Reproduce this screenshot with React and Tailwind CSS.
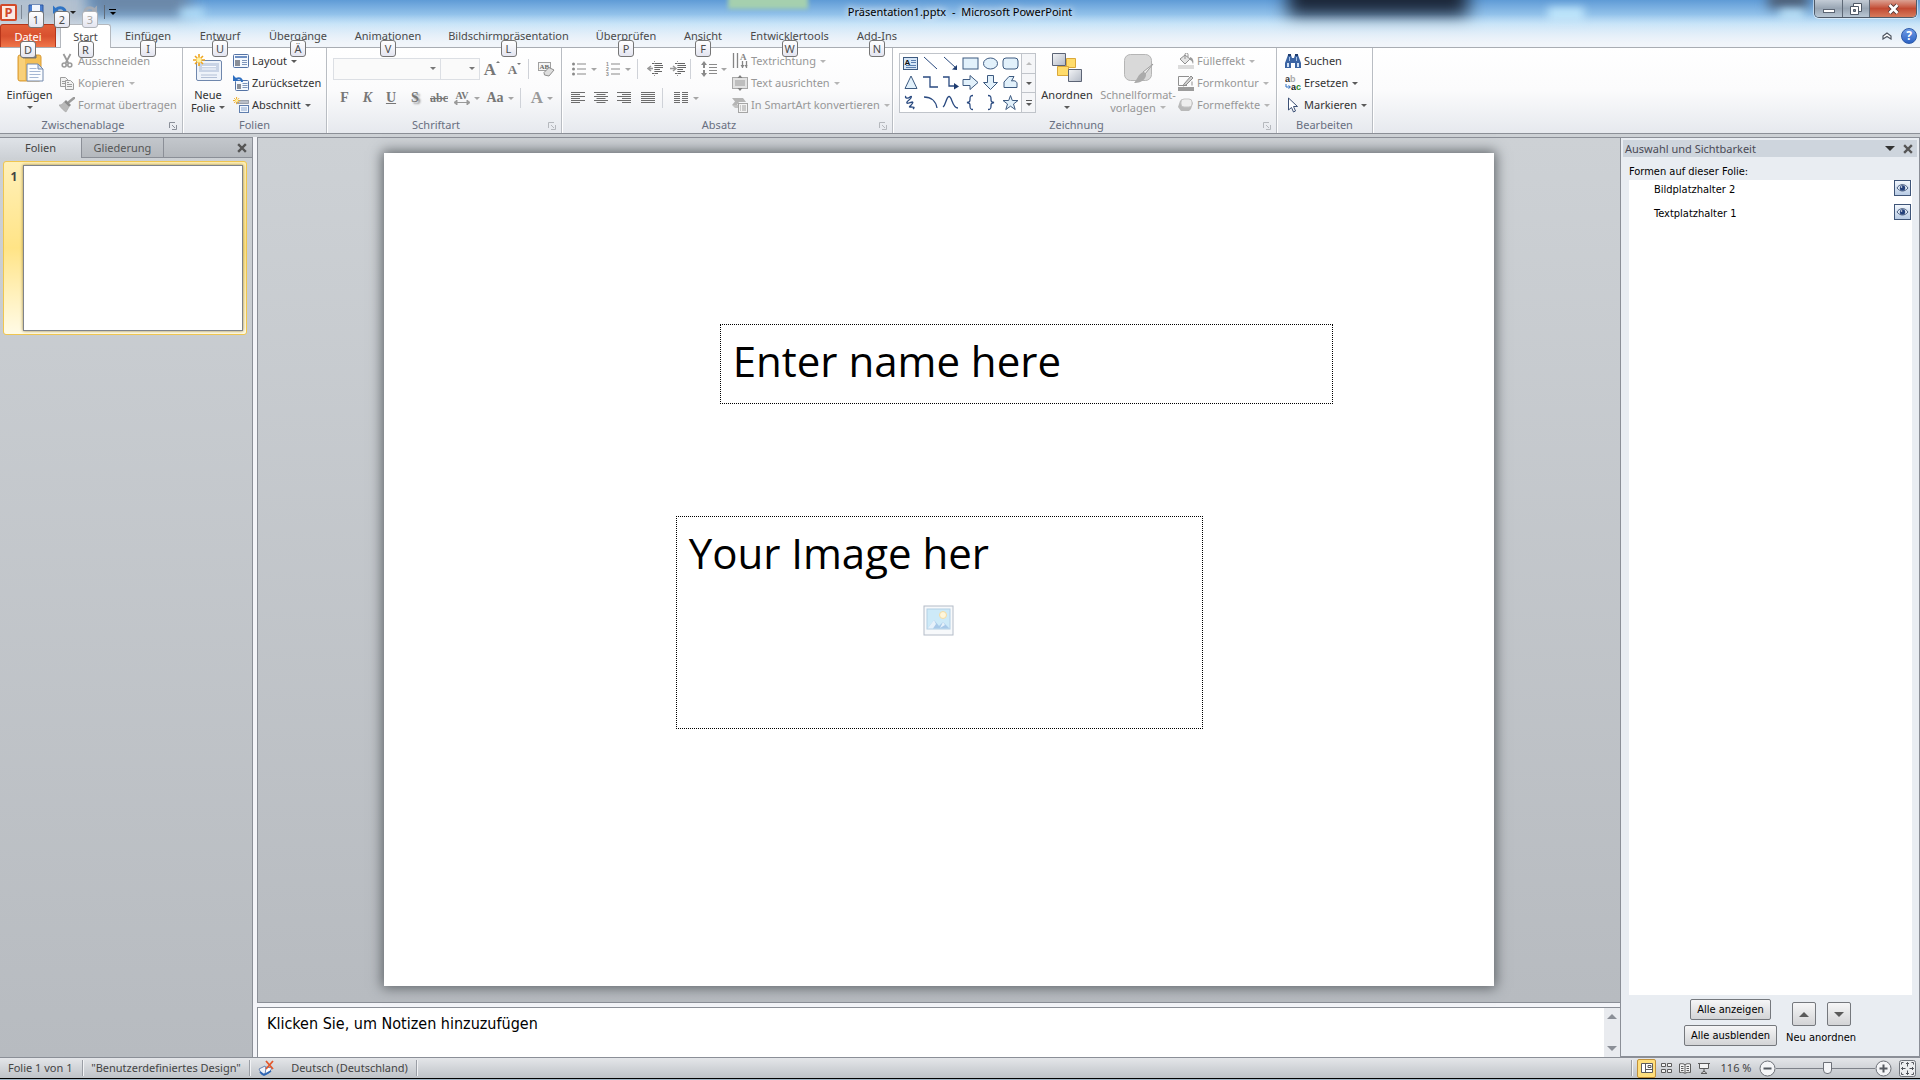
import React from "react";

const Caret = ({ up, className = "text-[#5a5a5a]", w = 6 }) => (
  <svg width={w} height={w / 2} viewBox="0 0 6 3" className={`shrink-0 ${className}`}>
    <path d={up ? "M0 3h6L3 0z" : "M0 0h6L3 3z"} fill="currentColor" />
  </svg>
);

const CloseX = () => (
  <svg width="10" height="10" viewBox="0 0 10 10">
    <path d="M2 2l6 6M8 2l-6 6" stroke="#555" strokeWidth="2.4" strokeLinecap="square" />
  </svg>
);

// ---------- icons: title bar ----------
const SaveIcon = () => (
  <svg width="16" height="16" viewBox="0 0 16 16">
    <path d="M1 1h14v14H3l-2-2z" fill="#4a7fd0" stroke="#2c56a0" />
    <path d="M4 1h8v7H4z" fill="#f2f6fc" />
    <path d="M5 10h6v5H5z" fill="#dfe6f0" />
  </svg>
);

const UndoIcon = ({ redo }) => (
  <svg width="16" height="16" viewBox="0 0 16 16" className={redo ? "-scale-x-100" : ""}>
    <path d="M4 5.500C8 2 14 4 13 10c-.3 2-1.500 3.500-3 4.500" fill="none" stroke={redo ? "#a4abb5" : "#2f74c4"} strokeWidth="3" />
    <path d="M1 1.500v8h8z" fill={redo ? "#a4abb5" : "#2f74c4"} />
  </svg>
);

// ---------- icons: clipboard / slides ----------
const PasteIcon = () => (
  <svg width="32" height="32" viewBox="0 0 32 32">
    <rect x="4" y="3" width="23" height="26" rx="2" fill="#f3bf56" stroke="#d99a35" />
    <rect x="5" y="4" width="6" height="24" fill="#f8d07a" />
    <path d="M9 6V3h3V1h7v2h3v3z" fill="#8b8f96" stroke="#5e6269" strokeWidth=".8" />
    <path d="M13 12h11l5 5v12H13z" fill="#fbfdff" stroke="#7289ad" />
    <path d="M24 12v5h5z" fill="#d5e0f0" stroke="#7289ad" />
    <path d="M15.500 16.500h7M15.500 19.500h11M15.500 22.500h11M15.500 25.500h9" stroke="#a5b7d3" />
  </svg>
);

const ScissorsIcon = () => (
  <svg width="16" height="16" viewBox="0 0 16 16" fill="none" stroke="#9a9a9a">
    <path d="M4.500 1l4.800 9M11.500 1L6.700 10" strokeWidth="1.800" />
    <circle cx="5.200" cy="12" r="2" strokeWidth="1.600" />
    <circle cx="10.800" cy="12" r="2" strokeWidth="1.600" />
  </svg>
);

const CopyIcon = () => (
  <svg width="16" height="16" viewBox="0 0 16 16" fill="#f1f1f1" stroke="#9c9c9c">
    <path d="M1.500 2.500h5l3 3v6h-8z" />
    <path d="M3 6.500h3M3 8.500h3" />
    <path d="M6.500 5.500h5l3 3v6h-8z" />
    <path d="M8 9.500h5M8 11.500h5M8 7.500h2" />
  </svg>
);

const BrushIcon = () => (
  <svg width="16" height="16" viewBox="0 0 16 16">
    <path d="M15 1l-5 4" stroke="#9b9b9b" strokeWidth="2.500" strokeLinecap="round" />
    <path d="M7 3l5 5-2 2-5-5z" fill="#8c8c8c" />
    <path d="M5 5l5 5-3 5c-2-1-5-4-7-7 2 0 4-1 5-3z" fill="#b9b9b9" stroke="#a5a5a5" strokeWidth=".6" />
  </svg>
);

const Spark = ({ s = 1 }) => (
  <g transform={`scale(${s})`}>
    <path d="M6 0v12M0 6h12M2 2l8 8M10 2l-8 8" stroke="#efa61f" strokeWidth="1.600" />
    <circle cx="6" cy="6" r="2.500" fill="#fff3a0" />
  </g>
);

const NewSlideIcon = () => (
  <svg width="32" height="32" viewBox="0 0 32 32">
    <rect x="4.500" y="8.500" width="25" height="20" rx="1.500" fill="#eef3fa" stroke="#6f87ad" />
    <rect x="7" y="11" width="20" height="9" fill="#c9d4e6" />
    <path d="M10 14.500h14M10 17h14" stroke="#f7faff" />
    <path d="M9 23h16M9 25.500h16" stroke="#b3c0d6" />
    <g transform="translate(1 2)">
      <Spark />
    </g>
  </svg>
);

const LayoutIcon = () => (
  <svg width="16" height="16" viewBox="0 0 16 16">
    <rect x=".5" y="1.500" width="15" height="13" rx="1" fill="#f4f8fd" stroke="#5473a5" />
    <path d="M2 4h12" stroke="#6d8fc3" strokeWidth="2" />
    <rect x="2" y="7" width="5" height="6" fill="#8a8f98" />
    <path d="M9 7.500h5M9 9.500h5M9 11.500h5" stroke="#7f96bb" />
  </svg>
);

const ResetIcon = () => (
  <svg width="16" height="16" viewBox="0 0 16 16">
    <rect x="2.500" y="5.500" width="13" height="10" rx="1" fill="#f4f8fd" stroke="#5473a5" />
    <rect x="4" y="9" width="4" height="5" fill="#8a8f98" />
    <path d="M9.500 8.500h5M9.500 10.500h5M9.500 12.500h5" stroke="#7f96bb" />
    <path d="M3 4c4-2 6 0 6 3" fill="none" stroke="#2f6fc0" strokeWidth="2" />
    <path d="M0 0v6h6z" fill="#2f6fc0" />
  </svg>
);

const SectionIcon = () => (
  <svg width="16" height="16" viewBox="0 0 16 16">
    <rect x="4.500" y="3.500" width="11" height="3" fill="#b8bec8" stroke="#8c93a0" strokeWidth=".8" />
    <rect x="6.500" y="8.500" width="9" height="7" fill="#f2f7fd" stroke="#5f7eae" />
    <path d="M8 11h6M8 13h6" stroke="#8da8cf" />
    <Spark s={0.6} />
  </svg>
);

// ---------- icons: font / paragraph ----------
const ClearFormatIcon = () => (
  <svg width="18" height="18" viewBox="0 0 18 18">
    <rect x="1.500" y="2.500" width="12" height="8" fill="#f4f4f4" stroke="#a0a0a0" />
    <text x="2.500" y="9" fontSize="7" fontFamily="Liberation Serif" fontWeight="bold" fill="#666">AB</text>
    <path d="M7 12.500l5-5 5 2.500-5 6-4.500-1z" fill="#dedede" stroke="#8e8e8e" />
  </svg>
);

const BulletsIcon = () => (
  <svg width="16" height="16" viewBox="0 0 16 16" fill="#8a8a8a">
    <circle cx="2.500" cy="3" r="1.500" />
    <circle cx="2.500" cy="8" r="1.500" />
    <circle cx="2.500" cy="13" r="1.500" />
    <path d="M6 2.500h9v1H6zM6 7.500h9v1H6zM6 12.500h9v1H6z" />
  </svg>
);

const NumberingIcon = () => (
  <svg width="16" height="16" viewBox="0 0 16 16" fill="#8a8a8a" fontFamily="Liberation Sans" fontSize="5" fontWeight="bold">
    <text x="1" y="5">1</text>
    <text x="1" y="10">2</text>
    <text x="1" y="15">3</text>
    <path d="M6 2.500h9v1H6zM6 7.500h9v1H6zM6 12.500h9v1H6z" />
  </svg>
);

const IndentIcon = ({ out }) => (
  <svg width="16" height="16" viewBox="0 0 16 16" stroke="#666">
    <path d="M5 2.500h10M8 4.500h8M8 6.500h8M8 8.500h5M8 10.500h7M5 12.500h6" />
    <path d="M7.500 0v16" strokeDasharray="1 1" stroke="#999" />
    <path d={out ? "M6 7.500H1M4 5L1 7.500 4 10" : "M0 7.500h5M3 5l3 2.500L3 10"} fill="none" stroke="#999" strokeWidth="1.500" />
  </svg>
);

const LineSpacingIcon = () => (
  <svg width="16" height="16" viewBox="0 0 16 16" fill="#8a8a8a">
    <path d="M3 0l3 4H4v3H2V4H0zM3 16l3-4H4V9H2v3H0z" />
    <path d="M8 3h8v1H8zM8 6h8v1H8zM8 9h8v1H8zM8 12h8v1H8z" />
  </svg>
);

const alignLines = {
  left: "M1 2.500h14M1 4.500h9M1 6.500h14M1 8.500h9M1 10.500h14M1 12.500h9",
  center: "M1 2.500h14M3.500 4.500h9M1 6.500h14M3.500 8.500h9M1 10.500h14M3.500 12.500h9",
  right: "M1 2.500h14M6 4.500h9M1 6.500h14M6 8.500h9M1 10.500h14M6 12.500h9",
  justify: "M1 2.500h14M1 4.500h14M1 6.500h14M1 8.500h14M1 10.500h14M1 12.500h14",
  columns: "M1 2.500h6M9 2.500h6M1 4.500h6M9 4.500h6M1 6.500h6M9 6.500h6M1 8.500h6M9 8.500h6M1 10.500h6M9 10.500h6M1 12.500h6M9 12.500h6",
};

const AlignIcon = ({ kind }) => (
  <svg width="16" height="16" viewBox="0 0 16 16">
    <path d={alignLines[kind]} stroke="#6d6d6d" />
  </svg>
);

const TextDirectionIcon = () => (
  <svg width="16" height="16" viewBox="0 0 16 16">
    <path d="M1.500 0v15M5.500 0v15M10.500 8v7M14.500 8v7" stroke="#858585" strokeWidth="1.300" />
    <path d="M8.500 12l2 3 2-3zM12.500 12l2 3 1-3z" fill="#858585" />
    <text x="8" y="7" fontSize="9" fontFamily="Liberation Serif" fontWeight="bold" fill="#858585">A</text>
  </svg>
);

const AlignTextIcon = () => (
  <svg width="16" height="16" viewBox="0 0 16 16">
    <rect x=".5" y="2.500" width="15" height="11" fill="#e2e2e2" stroke="#a8a8a8" />
    <path d="M3 6h10M3 8h10M3 10h10" stroke="#9a9a9a" />
    <path d="M8 0l2.500 3h-5zM8 16l2.500-3h-5z" fill="#7f7f7f" />
  </svg>
);

const SmartArtIcon = () => (
  <svg width="16" height="16" viewBox="0 0 16 16">
    <path d="M0 1h11l3 4H7l-2 3H0l3-3.500z" fill="#b5b5b5" />
    <path d="M0 8h6v3H3z" fill="#c4c4c4" />
    <rect x="6.500" y="6.500" width="9" height="9" fill="#f3f3f3" stroke="#a5a5a5" />
    <path d="M8 9h1M10 9h4M8 11h1M10 11h4M8 13h1M10 13h4" stroke="#a0a0a0" />
  </svg>
);

// ---------- icons: drawing ----------
const shapeProps = { fill: "#e2f1fb", stroke: "#3d5a80" };
const shapes = [
  { name: "Textfeld", body: (
    <>
      <rect x="1.500" y="2.500" width="14" height="12" {...shapeProps} fill="#d6e6f7" />
      <text x="2.500" y="9.500" fontSize="8" fontFamily="Liberation Sans" fontWeight="bold" fill="#111">A</text>
      <path d="M9 5.500h5M9 7.500h5M4 10.500h10M4 12.500h10" stroke="#5a7fb0" />
    </>
  ) },
  { name: "Linie", body: <path d="M2 2l13 12" stroke="#2a4a80" /> },
  { name: "Pfeil", body: (
    <>
      <path d="M2 2l12 11" stroke="#2a4a80" />
      <path d="M15 15v-5l-5 4.500z" fill="#1f3c70" />
    </>
  ) },
  { name: "Rechteck", body: <rect x="1" y="3" width="15" height="11" {...shapeProps} /> },
  { name: "Ellipse", body: <ellipse cx="8.500" cy="8.500" rx="7" ry="5.500" {...shapeProps} /> },
  { name: "Abgerundetes Rechteck", body: <rect x="1" y="3" width="15" height="11" rx="3" {...shapeProps} /> },
  { name: "Dreieck", body: <path d="M9 2l6 12.500H3z" {...shapeProps} /> },
  { name: "Gewinkelte Verbindung", body: <path d="M1 3h7v10h8" fill="none" stroke="#2a4a80" strokeWidth="1.300" /> },
  { name: "Gewinkelte Verbindung mit Pfeil", body: (
    <>
      <path d="M1 3h6v9h7" fill="none" stroke="#2a4a80" strokeWidth="1.300" />
      <path d="M12 9l5 3.500-5 3z" fill="#1f3c70" />
    </>
  ) },
  { name: "Pfeil nach rechts", body: <path d="M1 5.500h7v-4l8 7-8 7v-4H1z" {...shapeProps} /> },
  { name: "Pfeil nach unten", body: <path d="M5.500 1.500h6v7h4l-7 7-7-7h4z" {...shapeProps} /> },
  { name: "Freihandform", body: <path d="M2 13.500V8l5-5.500h5L9.500 7c4-1 6 1 5.500 4v2.500z" {...shapeProps} /> },
  { name: "Skizze", body: <path d="M4 2c-2 2 2 3 4 1s2 1-1 3-3 4 0 3 5-2 3 1-4 3-1 3 4 0 2 2" fill="none" stroke="#2a4a80" strokeWidth="1.300" /> },
  { name: "Bogen", body: <path d="M2 3c7 0 12 4 13 11" fill="none" stroke="#2a4a80" strokeWidth="1.300" /> },
  { name: "Kurve", body: <path d="M1 13C4 11 4 3 7 2.500S10 14 16 14" fill="none" stroke="#2a4a80" strokeWidth="1.300" /> },
  { name: "Klammer links", body: <path d="M11 1.500C8 1.500 8 3 8 5s0 3-3 3.500C8 9 8 10 8 12s0 3.500 3 3.500" fill="none" stroke="#2a4a80" strokeWidth="1.300" /> },
  { name: "Klammer rechts", body: <path d="M6 1.500c3 0 3 1.500 3 3.500s0 3 3 3.500C9 9 9 10 9 12s0 3.500-3 3.500" fill="none" stroke="#2a4a80" strokeWidth="1.300" /> },
  { name: "Stern", body: <path d="M8.500 1.500l1.800 5h5.700l-4.500 3.500 1.700 5.500-4.700-3.300-4.700 3.300L5.500 10 1 6.500h5.700z" {...shapeProps} /> },
];

const ArrangeIcon = () => (
  <svg width="32" height="32" viewBox="0 0 32 32">
    <defs>
      <linearGradient id="tile" x1="0" y1="0" x2="1" y2="1">
        <stop offset="0" stopColor="#f4f5f7" />
        <stop offset="1" stopColor="#b3bac6" />
      </linearGradient>
    </defs>
    <path d="M15.500 6.500h9v9h-9z" fill="#ffdc6b" stroke="#dba83a" />
    <path d="M6.500 14.500h11v9h-11z" fill="#ffdc6b" stroke="#dba83a" />
    <path d="M1.500 1.500h13v12h-13z" fill="url(#tile)" stroke="#5c6475" />
    <path d="M17.500 17.500h13v12h-13z" fill="url(#tile)" stroke="#5c6475" />
  </svg>
);

const QuickStyleIcon = () => (
  <svg width="32" height="32" viewBox="0 0 32 32">
    <rect x="2.500" y="2.500" width="27" height="26" rx="6" fill="#d9d9d9" stroke="#b5b5b5" />
    <path d="M31 12l-8 10-2-2z" fill="#f0f0f0" stroke="#9e9e9e" />
    <path d="M21 20c3 0 4 3 2 6-2 4-7 5-11 5 3-3 4-9 9-11z" fill="#ababab" />
  </svg>
);

const FillIcon = () => (
  <svg width="16" height="16" viewBox="0 0 16 16">
    <path d="M2 6l5-4 5 4-5 5z" fill="#e4e4e4" stroke="#8f8f8f" />
    <path d="M7 6V1.500a1.500 1.500 0 013 0V4" fill="none" stroke="#8f8f8f" />
    <path d="M12 4c3 1 4 4 3 7-1-2-1-4-4-4z" fill="#9b9b9b" />
    <path d="M0 12h16v4H0z" fill="#dcdcdc" />
  </svg>
);

const OutlineIcon = () => (
  <svg width="16" height="16" viewBox="0 0 16 16">
    <path d="M11 1.500H.5v9H9M14 6.500v4" fill="none" stroke="#8f8f8f" />
    <path d="M6 9l7-8 2 2-7 7-3 1z" fill="#d0d0d0" stroke="#8a8a8a" />
    <path d="M0 12h16v4H0z" fill="#9c9c9c" />
  </svg>
);

const EffectsIcon = () => (
  <svg width="16" height="16" viewBox="0 0 16 16">
    <path d="M4 2h8l3 4-2 6-2 2H3L0 10l2-6z" fill="#b9b9b9" />
    <rect x="3" y="2" width="11" height="8" rx="3" fill="#eeeeee" stroke="#c5c5c5" />
  </svg>
);

// ---------- icons: editing ----------
const FindIcon = () => (
  <svg width="16" height="16" viewBox="0 0 16 16">
    <path d="M3 2h3l1 3h2l1-3h3l3 8v5h-6v-5H6v5H0v-5z" fill="#3b64a3" />
    <path d="M3 1h3v2H3zM10 1h3v2h-3z" fill="#1f3d70" />
    <path d="M2 10h2v4H2zM12 10h2v4h-2z" fill="#cfe0f5" />
    <path d="M4 4h1v4H4zM11 4h1v4h-1z" fill="#a8c4e8" />
  </svg>
);

const ReplaceIcon = () => (
  <svg width="16" height="16" viewBox="0 0 16 16" fontFamily="Liberation Sans" fontSize="9" fontWeight="bold">
    <text x="0" y="7" fill="#333">a</text>
    <text x="5" y="7" fill="#aaa">b</text>
    <text x="6" y="15" fill="#222">a</text>
    <text x="11" y="15" fill="#1f8a2d">c</text>
    <path d="M1 9v3h4M3.500 10.500l2 1.500-2 1.500" fill="none" stroke="#2f6fc0" />
  </svg>
);

const SelectIcon = () => (
  <svg width="16" height="16" viewBox="0 0 16 16">
    <path d="M3.500 1v12l3-2.500 2 4.500 2-1-2-4.500h4z" fill="#fff" stroke="#3c5075" />
  </svg>
);

const EyeIcon = () => (
  <svg width="13" height="10" viewBox="0 0 13 10">
    <path d="M1 5c2-4 8-5 11 0-3 4-8 4-11 0z" fill="#dfe9f5" stroke="#4b5f80" />
    <circle cx="6.500" cy="5" r="2.700" fill="#24407a" />
    <circle cx="5.500" cy="4" r=".8" fill="#fff" />
  </svg>
);

const SpellIcon = () => (
  <svg width="17" height="16" viewBox="0 0 17 16">
    <path d="M1 9l6-3 3 6-6 3z" fill="#eef3fb" stroke="#6b86b3" />
    <path d="M8 7l6 1-3 5-4 2z" fill="#fff" stroke="#6b86b3" />
    <path d="M2 12l4 3L13 11" stroke="#2d66b5" strokeWidth="1.800" fill="none" />
    <path d="M8 1l7 8M15 1L8 9" stroke="#e4572a" strokeWidth="1.800" />
  </svg>
);

const PictureIcon = () => (
  <svg width="32" height="32" viewBox="0 0 32 32">
    <rect x="1" y="1" width="29" height="29" fill="#f7f9fb" stroke="#b4bcc8" />
    <rect x="4" y="4" width="23" height="20" fill="#cdeaf8" stroke="#b4cfe4" />
    <circle cx="20" cy="10" r="3.500" fill="#fff6da" stroke="#f3dba3" />
    <path d="M4.500 23.500L11 15l5 6 4-4 6.500 6.500z" fill="#a8c9e8" />
    <path d="M4.500 23.500L11 15l2 4-3 4.500zM17 23l3-6 2 3z" fill="#e6f1fa" />
  </svg>
);

// ---------- small building blocks ----------
const KeyTip = ({ children, dim }) => (
  <kbd
    className={`absolute left-1/2 -translate-x-1/2 z-10 w-4 h-[17px] rounded-[3px] border bg-linear-to-b from-white to-[#e4e5f0] font-[inherit] text-[11px] leading-[15px] text-center ${
      dim ? "border-[#b0b4ba] text-[#a5a5a5]" : "border-[#767676] text-[#4c4c4c]"
    } ${typeof children === "number" ? "top-[11px]" : "top-4"}`}
  >
    {children}
  </kbd>
);

const SmallButton = ({ icon, label, caret, disabled }) => (
  <button type="button" className={`flex items-center h-[22px] whitespace-nowrap ${disabled ? "text-[#979797]" : "text-[#333]"}`}>
    <span className="w-[19px] shrink-0">{icon}</span>
    {label}
    {caret && <Caret className={disabled ? "ml-1 text-[#b5b5b5]" : "ml-1 text-[#5a5a5a]"} />}
  </button>
);

const LargeButton = ({ icon, line1, line2, caret, disabled, className }) => (
  <button type="button" className={`flex flex-col items-center h-[66px] pt-[2px] shrink-0 leading-[13px] whitespace-nowrap ${disabled ? "text-[#979797]" : "text-[#333]"} ${className}`}>
    {icon}
    <span className="mt-1">{line1}</span>
    <span className="flex items-center gap-1 h-[13px]">
      {line2}
      {caret && <Caret className={disabled ? "text-[#b5b5b5]" : "text-[#5a5a5a]"} />}
    </span>
  </button>
);

const ToolButton = ({ label, caret, className = "w-[23px]", children }) => (
  <button type="button" aria-label={label} className={`flex items-center justify-center gap-1 h-[22px] shrink-0 text-[#777] ${className}`}>
    {children}
    {caret && <Caret className="text-[#a5a5a5]" />}
  </button>
);

const Divider = () => <span className="w-px h-5 mx-[3px] bg-[#cfd2d8] shrink-0" />;

const Group = ({ title, launcher, dim, className, children }) => (
  <section className={`flex flex-col shrink-0 pt-[2px] border-r border-[#b9bdc3] shadow-[1px_0_0_#fff] ${className}`}>
    <div className="flex h-[66px]">{children}</div>
    <div className={`relative h-[17px] leading-[17px] text-center text-[#686f80] ${launcher ? "pr-4" : ""}`}>
      {title}
      {launcher && (
        <button type="button" aria-label={`${title} öffnen`} className="absolute right-[5px] top-[6px]">
          <svg width="8" height="8" viewBox="0 0 8 8" stroke={dim ? "#b5b8bd" : "#8a8f98"} fill="none">
            <path d="M.5 6V.5H6M3 3l3 3M7.500 3v4.500H3" />
          </svg>
        </button>
      )}
    </div>
  </section>
);

const tabs = [
  { label: "Einfügen", tip: "I", width: "w-[74px]" },
  { label: "Entwurf", tip: "U", width: "w-[70px]" },
  { label: "Übergänge", tip: "Ä", width: "w-[86px]" },
  { label: "Animationen", tip: "V", width: "w-[94px]" },
  { label: "Bildschirmpräsentation", tip: "L", width: "w-[147px]" },
  { label: "Überprüfen", tip: "P", width: "w-[88px]" },
  { label: "Ansicht", tip: "F", width: "w-[66px]" },
  { label: "Entwicklertools", tip: "W", width: "w-[107px]" },
  { label: "Add-Ins", tip: "N", width: "w-[68px]" },
];

// glass frame with the blurred windows behind it
const GlassBackdrop = () => (
  <div aria-hidden="true" className="absolute inset-0 -z-10 overflow-hidden bg-linear-to-b from-[#5f9bd6] via-[#b5dcf7] to-[#dce8f5]">
    <span className="absolute -left-5 -top-3 w-[110px] h-12 bg-[#b4c1cf] blur-[8px]" />
    <span className="absolute left-[90px] -top-3 w-[100px] h-7 bg-[#6c87a6] blur-[8px]" />
    <span className="absolute left-[180px] top-2 w-6 h-3 bg-[#b0dcf8] blur-[5px]" />
    <span className="absolute left-[728px] -top-2 w-[80px] h-[17px] bg-[#a5d0ae] blur-[2px]" />
    <span className="absolute left-[1288px] -top-6 w-[180px] h-10 bg-[#1b2536] blur-[9px]" />
    <span className="absolute left-[1548px] top-2 w-9 h-3 bg-[#c4eafd] blur-[5px]" />
    <span className="absolute left-[1768px] -top-2 w-10 h-4 bg-[#4c5a6e] blur-[6px]" />
    <span className="absolute left-[1780px] top-[10px] w-6 h-2 bg-[#c4eafd] blur-[4px]" />
    <span className="absolute inset-0 bg-[linear-gradient(#fff0_30%,#f1f5fa_92%)]" />
  </div>
);

function TitleBar() {
  return (
    <header className="relative flex items-start justify-between h-6">
      <div className="flex items-center h-6">
        <span className="flex items-center justify-center w-[17px] h-[17px] border-2 border-[#d2492a] rounded-[2px] bg-[#fbe9e3] text-[13px] font-bold leading-none text-[#d2492a]">
          P
        </span>
        <span className="w-px h-[14px] ml-1 mr-[2px] bg-[#7d8896]" />
        <button type="button" aria-label="Speichern" className="relative w-6 h-6 flex justify-center pt-1">
          <SaveIcon />
          <KeyTip>{1}</KeyTip>
        </button>
        <button type="button" aria-label="Rückgängig" className="relative w-7 h-6 flex pl-1 pt-1">
          <UndoIcon />
          <KeyTip>{2}</KeyTip>
        </button>
        <Caret className="-ml-[6px] text-[#222]" />
        <button type="button" aria-label="Wiederholen" className="relative w-7 h-6 flex justify-center pt-1">
          <UndoIcon redo />
          <KeyTip dim>{3}</KeyTip>
        </button>
        <span className="w-px h-[14px] mr-1 bg-[#5f6b79]" />
        <button type="button" aria-label="Symbolleiste anpassen" className="flex flex-col items-center gap-[2px]">
          <span className="w-[7px] h-px bg-black" />
          <Caret className="text-black" />
        </button>
      </div>

      <h1 className="absolute inset-x-0 top-0 leading-6 text-center text-black whitespace-pre pointer-events-none [text-shadow:0_0_6px_#fff,0_0_10px_#fff]">
        {"Präsentation1.pptx  -  Microsoft PowerPoint"}
      </h1>

      <div className="flex h-[18px] mr-[3px] border border-t-0 border-[#4f5a68] rounded-b-[5px] overflow-hidden shadow-[0_0_0_1px_#ffffff80]">
        <button type="button" aria-label="Minimieren" className="flex items-center justify-center w-[28px] bg-linear-to-b from-[#c3ccd6] via-[#98a5b3] to-[#b9c7d4] border-r border-[#5e6977]">
          <span className="w-3 h-1 bg-white border border-[#5b6573] mt-1" />
        </button>
        <button type="button" aria-label="Verkleinern" className="flex items-center justify-center w-[27px] bg-linear-to-b from-[#c3ccd6] via-[#98a5b3] to-[#b9c7d4] border-r border-[#5e6977]">
          <svg width="12" height="12" viewBox="0 0 12 12" fill="#fff" stroke="#4f5967">
            <path d="M3.500.5h8v8h-8z" />
            <path d="M.5 3.500h8v8h-8z" />
            <path d="M3.500 6.500h2v2h-2z" fill="#7c8896" />
          </svg>
        </button>
        <button type="button" aria-label="Schließen" className="flex items-center justify-center w-[46px] bg-linear-to-b from-[#dba193] via-[#c24a33] to-[#d67a5c]">
          <svg width="13" height="12" viewBox="0 0 13 12">
            <path d="M2.500 2l8 8M10.500 2l-8 8" stroke="#4a3030" strokeWidth="4.500" />
            <path d="M2.500 2l8 8M10.500 2l-8 8" stroke="#fff" strokeWidth="2.800" />
          </svg>
        </button>
      </div>
    </header>
  );
}

function RibbonTabs() {
  return (
    <nav className="flex h-6 pr-[3px] leading-6 text-center text-[#4a4a4a] border-b border-[#a9adb3]">
      <button type="button" className="relative w-[56px] h-[23px] mr-1 rounded-t-[3px] border border-b-0 border-[#b5351a] bg-linear-to-b from-[#e2603a] via-[#d8502e] to-[#f0764a] text-white">
        Datei
        <KeyTip>D</KeyTip>
      </button>
      <button type="button" className="relative w-[51px] h-6 rounded-t-[3px] border border-b-0 border-[#b4b8be] bg-white">
        Start
        <KeyTip>R</KeyTip>
      </button>
      {tabs.map((tab) => (
        <button type="button" key={tab.label} className={`relative h-6 whitespace-nowrap ${tab.width}`}>
          {tab.label}
          <KeyTip>{tab.tip}</KeyTip>
        </button>
      ))}
      <div className="flex items-center gap-[9px] ml-auto">
        <button type="button" aria-label="Menüband minimieren">
          <svg width="10" height="8" viewBox="0 0 10 8" fill="none" stroke="#4d5560" strokeWidth="1.200">
            <path d="M1 4l4-3 4 3v3L5 4.500 1 7z" fill="#fff" />
          </svg>
        </button>
        <button type="button" aria-label="Hilfe" className="w-4 h-4 rounded-full border border-[#2d5aa8] bg-linear-to-b from-[#6f9be6] to-[#2c62c4] text-white text-[12px] font-bold leading-[14px]">
          ?
        </button>
      </div>
    </nav>
  );
}

function Ribbon() {
  return (
    <div className="flex h-[86px] border-b border-[#8c9097] bg-linear-to-b from-white via-[#fbfbfc] to-[#e6e9ee]">
      <Group title="Zwischenablage" launcher className="w-[183px]">
        <LargeButton icon={<PasteIcon />} line1="Einfügen" caret className="w-[59px]" />
        <div>
          <SmallButton icon={<ScissorsIcon />} label="Ausschneiden" disabled />
          <SmallButton icon={<CopyIcon />} label="Kopieren" caret disabled />
          <SmallButton icon={<BrushIcon />} label="Format übertragen" disabled />
        </div>
      </Group>

      <Group title="Folien" className="w-[144px]">
        <LargeButton icon={<NewSlideIcon />} line1="Neue" line2="Folie" caret className="w-[50px]" />
        <div>
          <SmallButton icon={<LayoutIcon />} label="Layout" caret />
          <SmallButton icon={<ResetIcon />} label="Zurücksetzen" />
          <SmallButton icon={<SectionIcon />} label="Abschnitt" caret />
        </div>
      </Group>

      <Group title="Schriftart" launcher dim className="w-[235px]">
        <div className="flex flex-col gap-[7px] pt-2 pl-[6px]">
          <div className="flex items-center">
            <div className="relative">
              <select aria-label="Schriftart" className="block w-[108px] h-[22px] appearance-none border border-[#dcdfe4] bg-[#fafafa]">
                <option></option>
              </select>
              <Caret className="absolute right-[5px] top-[9px] text-[#777]" />
            </div>
            <div className="relative -ml-px">
              <select aria-label="Schriftgrad" className="block w-[40px] h-[22px] appearance-none border border-[#dcdfe4] bg-[#fafafa]">
                <option></option>
              </select>
              <Caret className="absolute right-[5px] top-[9px] text-[#777]" />
            </div>
            <ToolButton label="Schriftgrad vergrößern" className="w-6">
              <span className="flex font-['Liberation_Serif'] text-[17px] leading-none font-bold">A<Caret up w={4} className="text-[#777]" /></span>
            </ToolButton>
            <ToolButton label="Schriftgrad verkleinern" className="w-[21px]">
              <span className="flex font-['Liberation_Serif'] text-[13px] leading-none font-bold">A<Caret w={4} className="text-[#777]" /></span>
            </ToolButton>
            <Divider />
            <ToolButton label="Formatierung löschen" className="w-7"><ClearFormatIcon /></ToolButton>
          </div>
          <div className="flex items-center font-['Liberation_Serif'] text-[14px] font-bold">
            <ToolButton label="Fett">F</ToolButton>
            <ToolButton label="Kursiv"><i>K</i></ToolButton>
            <ToolButton label="Unterstrichen" className="w-6"><u>U</u></ToolButton>
            <ToolButton label="Schatten" className="w-6"><span className="[text-shadow:2px_2px_2px_#888]">S</span></ToolButton>
            <ToolButton label="Durchgestrichen" className="w-6"><s className="text-[12px]">abc</s></ToolButton>
            <ToolButton label="Zeichenabstand" caret className="w-8">
              <span className="flex flex-col items-center text-[10px] leading-[9px]">
                AV
                <svg width="16" height="5" viewBox="0 0 16 5"><path d="M3 2.500h10M3 0L0 2.500 3 5zM13 0l3 2.500L13 5z" fill="#999" stroke="#999" /></svg>
              </span>
            </ToolButton>
            <ToolButton label="Groß-/Kleinschreibung" caret className="w-[34px]">Aa</ToolButton>
            <Divider />
            <ToolButton label="Schriftfarbe" caret className="w-9"><span className="text-[17px] text-[#999]">A</span></ToolButton>
          </div>
        </div>
      </Group>

      <Group title="Absatz" launcher dim className="w-[331px]">
        <div className="flex flex-col gap-[7px] w-[170px] pt-2 pl-1">
          <div className="flex items-center">
            <ToolButton label="Aufzählungszeichen" caret className="w-9"><BulletsIcon /></ToolButton>
            <ToolButton label="Nummerierung" caret className="w-8"><NumberingIcon /></ToolButton>
            <Divider />
            <ToolButton label="Listenebene verringern" className="w-7"><IndentIcon out /></ToolButton>
            <ToolButton label="Listenebene erhöhen" className="w-[18px]"><IndentIcon /></ToolButton>
            <Divider />
            <ToolButton label="Zeilenabstand" caret className="w-10"><LineSpacingIcon /></ToolButton>
          </div>
          <div className="flex items-center">
            <ToolButton label="Linksbündig"><AlignIcon kind="left" /></ToolButton>
            <ToolButton label="Zentriert"><AlignIcon kind="center" /></ToolButton>
            <ToolButton label="Rechtsbündig" className="w-6"><AlignIcon kind="right" /></ToolButton>
            <ToolButton label="Blocksatz"><AlignIcon kind="justify" /></ToolButton>
            <Divider />
            <ToolButton label="Spalten" caret className="w-10"><AlignIcon kind="columns" /></ToolButton>
          </div>
        </div>
        <div>
          <SmallButton icon={<TextDirectionIcon />} label="Textrichtung" caret disabled />
          <SmallButton icon={<AlignTextIcon />} label="Text ausrichten" caret disabled />
          <SmallButton icon={<SmartArtIcon />} label="In SmartArt konvertieren" caret disabled />
        </div>
      </Group>

      <Group title="Zeichnung" launcher dim className="w-[384px]">
        <div className="flex w-[137px] h-[60px] mt-[3px] ml-[6px] shrink-0 border border-[#c0c4ca] bg-white">
          <div className="grid grid-cols-6 flex-1">
            {shapes.map((shape) => (
              <button type="button" key={shape.name} aria-label={shape.name} className="flex items-center justify-center">
                <svg width="17" height="17" viewBox="0 0 17 17">{shape.body}</svg>
              </button>
            ))}
          </div>
          <div className="flex flex-col w-[14px] divide-y divide-[#c0c4ca] border-l border-[#c0c4ca] bg-[#f5f6f8]">
            <button type="button" aria-label="Nach oben" className="flex flex-1 items-center justify-center"><Caret up className="text-[#bbb]" /></button>
            <button type="button" aria-label="Nach unten" className="flex flex-1 items-center justify-center"><Caret /></button>
            <button type="button" aria-label="Weitere" className="flex flex-col flex-1 items-center justify-center gap-[2px]">
              <span className="w-[6px] h-px bg-[#5a5a5a]" />
              <Caret />
            </button>
          </div>
        </div>
        <LargeButton icon={<ArrangeIcon />} line1="Anordnen" caret className="w-[62px]" />
        <LargeButton icon={<QuickStyleIcon />} line1="Schnellformat-" line2="vorlagen" caret disabled className="w-20" />
        <div>
          <SmallButton icon={<FillIcon />} label="Fülleffekt" caret disabled />
          <SmallButton icon={<OutlineIcon />} label="Formkontur" caret disabled />
          <SmallButton icon={<EffectsIcon />} label="Formeffekte" caret disabled />
        </div>
      </Group>

      <Group title="Bearbeiten" className="w-[96px]">
        <div className="pl-2">
          <SmallButton icon={<FindIcon />} label="Suchen" />
          <SmallButton icon={<ReplaceIcon />} label="Ersetzen" caret />
          <SmallButton icon={<SelectIcon />} label="Markieren" caret />
        </div>
      </Group>
    </div>
  );
}

function SlidesPane() {
  return (
    <aside className="flex flex-col w-[253px] shrink-0 border-t border-r border-[#8b8f97]">
      <div className="flex h-5 leading-[18px] text-center text-[#555]">
        <button type="button" className="w-[81px] bg-linear-to-b from-[#dfe3e8] to-[#cdd1d6] text-[#444]">Folien</button>
        <button type="button" className="w-[83px] border-x border-b border-[#8b8f97] bg-linear-to-b from-[#c3c7cc] to-[#b4b8bd]">Gliederung</button>
        <div className="flex flex-1 items-center justify-end pr-[5px] border-b border-[#8b8f97] bg-linear-to-b from-[#c3c7cc] to-[#b4b8bd]">
          <button type="button" aria-label="Bereich schließen"><CloseX /></button>
        </div>
      </div>
      <div className="flex mt-[3px] mx-[3px] mr-[5px] h-[174px] p-[3px] rounded-[3px] border border-[#f0c650] bg-linear-to-b from-[#fff0b8] via-[#ffe486] to-[#fffbe6]">
        <span className="w-4 pt-1 pr-[2px] text-center text-[12px] leading-4 font-bold text-[#444]">1</span>
        <div className="flex-1 border border-[#7f838a] bg-white shadow-[0_0_3px_#9a8340]" />
      </div>
    </aside>
  );
}

function SlideEditor() {
  return (
    <main className="flex flex-col flex-1 min-w-0 bg-[#f3f4f8]">
      <div className="flex flex-1 min-h-0 items-center justify-center pb-[2px] border-l border-t border-b border-[#8b8f97] bg-linear-to-b from-[#cdd1d5] to-[#b7bbc0]">
        <div className="relative h-[calc(100%-29px)] aspect-[4/3] bg-white shadow-[0_0_12px_2px_#5f6468]">
          <div className="absolute left-[336px] top-[171px] w-[613px] h-[80px] px-3 border border-dotted border-black text-[42px] leading-[72px] text-black font-['Open_Sans',sans-serif]">
            Enter name here
          </div>
          <div className="absolute left-[292px] top-[363px] w-[527px] h-[213px] px-3 border border-dotted border-black text-[42px] leading-[72px] text-black font-['Open_Sans',sans-serif]">
            Your Image her
            <button type="button" aria-label="Bild einfügen" className="block mx-auto mt-4">
              <PictureIcon />
            </button>
          </div>
        </div>
      </div>
      <div className="flex h-[50px] mt-1 border-l border-t border-[#8b8f97] bg-white">
        <textarea
          aria-label="Notizen"
          defaultValue="Klicken Sie, um Notizen hinzuzufügen"
          className="flex-1 px-[9px] py-1 resize-none outline-none text-[16px] leading-6 text-black font-['DejaVu_Sans_Condensed','DejaVu_Sans',sans-serif]"
        />
        <div className="flex flex-col items-center justify-between w-4 py-[6px] bg-[#e9ebef]">
          <Caret up w={10} className="text-[#8b8f97]" />
          <Caret w={10} className="text-[#8b8f97]" />
        </div>
      </div>
    </main>
  );
}

const paneButton = "rounded-[2px] border border-[#75787d] bg-linear-to-b from-[#f6f6f7] to-[#d3d4d6] text-black";

function SelectionPane() {
  return (
    <aside className="flex flex-col w-[300px] shrink-0 p-[2px] pb-0 border border-[#8b8f97] bg-[#e9edf2] font-['DejaVu_Sans_Condensed','DejaVu_Sans',sans-serif] text-[11px] text-black">
      <div className="flex items-center h-[17px] pl-[2px] pr-1 bg-[#ced5dd] font-['Noto_Sans',sans-serif] text-[#4a4a55]">
        <h2 className="flex-1">Auswahl und Sichtbarkeit</h2>
        <button type="button" aria-label="Optionen" className="mr-2"><Caret w={10} className="text-[#333]" /></button>
        <button type="button" aria-label="Schließen"><CloseX /></button>
      </div>
      <p className="mt-[7px] pl-[6px] leading-4">Formen auf dieser Folie:</p>
      <ul className="flex-1 ml-[6px] mr-[5px] bg-white">
        {["Bildplatzhalter 2", "Textplatzhalter 1"].map((name) => (
          <li key={name} className="flex justify-between h-6 pl-[25px] leading-5">
            {name}
            <button type="button" aria-label={`${name} ein-/ausblenden`} className="flex items-center justify-center w-[17px] h-4 mr-px border border-[#3f5578] bg-linear-to-b from-[#f2f7fd] to-[#b8cbe4]">
              <EyeIcon />
            </button>
          </li>
        ))}
      </ul>
      <div className="flex h-[61px] pt-1 pl-[61px]">
        <div className="flex flex-col items-center gap-[5px]">
          <button type="button" className={`w-[81px] h-[21px] ${paneButton}`}>Alle anzeigen</button>
          <button type="button" className={`w-[93px] h-[21px] ${paneButton}`}>Alle ausblenden</button>
        </div>
        <div className="pt-[3px] ml-[9px]">
          <div className="flex justify-center gap-[11px]">
            <button type="button" aria-label="Nach vorne" className={`flex items-center justify-center w-6 h-6 ${paneButton}`}><Caret up w={10} /></button>
            <button type="button" aria-label="Nach hinten" className={`flex items-center justify-center w-6 h-6 ${paneButton}`}><Caret w={10} /></button>
          </div>
          <p className="mt-1 leading-4">Neu anordnen</p>
        </div>
      </div>
    </aside>
  );
}

const StatusDivider = () => <span className="w-px h-4 bg-[#9a9ea5] shadow-[1px_0_0_#f2f3f5]" />;

const ZoomStep = ({ plus }) => (
  <button type="button" aria-label={plus ? "Vergrößern" : "Verkleinern"}>
    <svg width="17" height="17" viewBox="0 0 17 17">
      <circle cx="8.500" cy="8.500" r="7.500" fill="#f4f5f7" stroke="#6d7178" />
      <path d={plus ? "M4.500 8.500h8M8.500 4.500v8" : "M4.500 8.500h8"} stroke="#555a61" strokeWidth="2" />
    </svg>
  </button>
);

function StatusBar() {
  return (
    <footer className="flex items-center justify-between h-[21px] border-t border-[#8b8f97] bg-linear-to-b from-[#e4e6e9] to-[#bfc3c8] text-[#444]">
      <div className="flex items-center">
        <span className="w-[82px] pl-2">Folie 1 von 1</span>
        <StatusDivider />
        <span className="w-[166px] text-center">"Benutzerdefiniertes Design"</span>
        <StatusDivider />
        <button type="button" aria-label="Rechtschreibprüfung" className="ml-2"><SpellIcon /></button>
        <span className="w-[141px] pl-2 text-center">Deutsch (Deutschland)</span>
        <StatusDivider />
      </div>
      <div className="flex items-center pr-1">
        <StatusDivider />
        <div className="flex items-center gap-px ml-[5px]">
          <button type="button" aria-label="Normal" className="flex items-center justify-center w-[19px] h-[19px] rounded-[2px] border border-[#c0903a] bg-[#ffdf7c]">
            <svg width="12" height="10" viewBox="0 0 12 10" fill="#fff" stroke="#5b5b5b"><path d="M.5.5h11v9H.5zM4.500.5v9M4.500 6.500h7M7 2.500h3v2H7z" /></svg>
          </button>
          <button type="button" aria-label="Foliensortierung" className="flex justify-center w-[18px]">
            <svg width="11" height="10" viewBox="0 0 11 10" fill="#f4f4f4" stroke="#5b5b5b"><path d="M.5.5h4v3h-4zM6.500.5h4v3h-4zM.5 6.500h4v3h-4zM6.500 6.500h4v3h-4z" /></svg>
          </button>
          <button type="button" aria-label="Leseansicht" className="flex justify-center w-[18px]">
            <svg width="12" height="11" viewBox="0 0 12 11" fill="#f4f4f4" stroke="#5b5b5b"><path d="M.5 1C3 .3 5 .8 6 1.800 7 .8 9 .3 11.500 1v8.500C9 9 7 9.500 6 10.500 5 9.500 3 9 .5 9.500zM6 2v8M2 3.500h2.500M2 5.500h2.500M2 7.500h2.500M7.500 3.500H10M7.500 5.500H10M7.500 7.500H10" /></svg>
          </button>
          <button type="button" aria-label="Bildschirmpräsentation" className="flex justify-center w-[18px]">
            <svg width="12" height="11" viewBox="0 0 12 11" fill="#f4f4f4" stroke="#5b5b5b"><path d="M0 .5h12M1.500.5v5h9v-5M6 5.500v4M3 10.500L6 8l3 2.500z" /></svg>
          </button>
        </div>
        <button type="button" className="w-[46px]">116 %</button>
        <ZoomStep />
        <input
          type="range"
          aria-label="Zoom"
          defaultValue="52"
          className="w-[99px] h-4 appearance-none bg-[linear-gradient(#7d8188,#7d8188)] bg-no-repeat bg-center bg-size-[100%_1px] [&::-webkit-slider-thumb]:appearance-none [&::-webkit-slider-thumb]:w-[9px] [&::-webkit-slider-thumb]:h-3 [&::-webkit-slider-thumb]:rounded-b-[4px] [&::-webkit-slider-thumb]:border [&::-webkit-slider-thumb]:border-[#6d7178] [&::-webkit-slider-thumb]:bg-[#f4f5f7]"
        />
        <ZoomStep plus />
        <button type="button" aria-label="An Fenster anpassen" className="ml-[7px]">
          <svg width="17" height="17" viewBox="0 0 17 17">
            <rect x=".5" y=".5" width="16" height="16" rx="2" fill="#eceef0" stroke="#70747b" />
            <path d="M8.500 2.500v4M7 4l1.500-1.500L10 4M8.500 14.500v-4M7 13l1.500 1.500L10 13M2.500 8.500h4M4 7L2.500 8.500 4 10M14.500 8.500h-4M13 7l1.500 1.500L13 10" fill="none" stroke="#4f535a" />
            <path d="M2.500 4.500v-2h2M12.500 2.500h2v2M2.500 12.500v2h2M14.500 12.500v2h-2" fill="none" stroke="#4f535a" />
          </svg>
        </button>
      </div>
    </footer>
  );
}

export default function App() {
  return (
    <div className="flex flex-col h-screen overflow-hidden font-['Noto_Sans',sans-serif] text-[11px] leading-4">
      <div className="relative isolate z-10">
        <GlassBackdrop />
        <TitleBar />
        <RibbonTabs />
      </div>
      <Ribbon />
      <div className="flex flex-1 min-h-0 pt-[3px] bg-linear-to-b from-[#cdd1d5] to-[#b7bbc0]">
        <SlidesPane />
        <div className="w-1 shrink-0 bg-[#f3f4f8]" />
        <SlideEditor />
        <SelectionPane />
      </div>
      <StatusBar />
      <div className="h-[2px] shrink-0 border-t border-black bg-[#9fb4c4]" />
    </div>
  );
}
